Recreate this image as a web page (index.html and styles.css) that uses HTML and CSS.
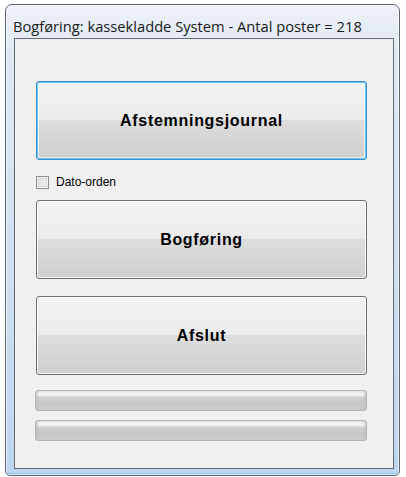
FILE: index.html
```html
<!DOCTYPE html>
<html lang="da">
<head>
    <meta charset="UTF-8">
    <meta name="viewport" content="width=device-width, initial-scale=1.0">
    <title>Bogføring</title>
    <link rel="stylesheet" href="styles.css">
</head>
<body>
    <div class="window">
        <div class="titlebar">Bogføring: kassekladde System - Antal poster = 218</div>

        <div class="client">
            <button class="btn btn-default">Afstemningsjournal</button>

            <label class="check-row">
                <input type="checkbox" class="check">
                <span>Dato-orden</span>
            </label>

            <button class="btn">Bogføring</button>
            <button class="btn btn-last">Afslut</button>

            <!-- two empty progress bars -->
            <div class="progress"></div>
            <div class="progress"></div>
        </div>
    </div>
</body>
</html>
```

FILE: styles.css
```css
* {
    margin: 0;
    padding: 0;
    box-sizing: border-box;
}

body {
    background: #ffffff;
    font-family: 'Liberation Sans', Arial, sans-serif;
}

.window {
    margin: 4px 0 0 5px;
    width: 395px;
    height: 472px;
    border: 1px solid #5b6470;
    border-radius: 7px 7px 5px 5px;
    background: linear-gradient(to bottom, #eef2f8 0%, #dfe8f3 10%, #cddef0 60%, #bcd6f0 100%);
    box-shadow: inset 0 0 0 1px rgba(255, 255, 255, 0.7), inset 0 -2px 0 0 #8cc8ef;
    padding: 0 5px 6px 8px;
    display: flex;
    flex-direction: column;
}

.titlebar {
    height: 33px;
    padding-top: 12px;
    margin-left: -1px;
    font-family: 'Open Sans', sans-serif;
    font-size: 14.7px;
    line-height: 18px;
    color: #1a1a1a;
    white-space: nowrap;
}

.client {
    flex: 1;
    background: #f0f0f0;
    border: 1px solid #646b74;
    padding: 42px 0 0 21px;
    display: flex;
    flex-direction: column;
}

.btn {
    width: 331px;
    height: 79px;
    border: 1px solid #707070;
    border-radius: 3px;
    background: linear-gradient(to bottom, #f2f2f2 0%, #ebebeb 49%, #dddddd 50%, #cfcfcf 100%);
    box-shadow: inset 0 0 0 1px rgba(255, 255, 255, 0.8);
    font-family: 'Liberation Sans', Arial, sans-serif;
    font-weight: bold;
    font-size: 16px;
    letter-spacing: 0.7px;
    color: #000;
    cursor: pointer;
}

.btn-default {
    border-color: #3c8fce;
    box-shadow: inset 0 0 0 1px #62c5f2, inset 0 0 0 2px rgba(255, 255, 255, 0.6);
}

.btn-last {
    margin-top: 17px;
}

.check-row {
    display: flex;
    align-items: center;
    gap: 7px;
    margin: 15px 0 11px 0;
    font-size: 12px;
    color: #000;
}

.check {
    appearance: none;
    width: 13px;
    height: 13px;
    border: 1px solid #8e8f8f;
    background: linear-gradient(135deg, #dcdcdc, #f6f6f6);
    box-shadow: inset 0 0 0 1px #f4f4f4, inset 0 0 0 2px #d4d4d4;
}

.progress {
    width: 332px;
    height: 21px;
    margin-left: -1px;
    border: 1px solid #b4b4b4;
    border-radius: 3px;
    background: linear-gradient(to bottom, #eaeaea 0%, #f4f4f4 20%, #cfcfcf 35%, #c6c6c6 70%, #cdcdcd 100%);
    box-shadow: inset 3px 0 3px -2px #bdbdbd, inset -3px 0 3px -2px #bdbdbd;
}

.progress:first-of-type {
    margin-top: 15px;
}

.progress + .progress {
    margin-top: 9px;
}
```
